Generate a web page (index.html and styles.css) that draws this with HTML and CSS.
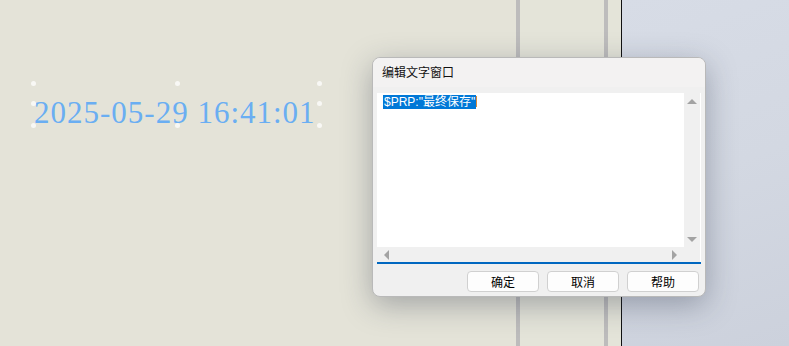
FILE: index.html
```html
<!DOCTYPE html>
<html lang="zh-CN">
<head>
    <meta charset="UTF-8">
    <title>编辑文字窗口</title>
    <link rel="stylesheet" href="styles.css">
</head>
<body>
    <!-- Drawing sheet -->
    <div class="sheet">
        <div class="note">2025-05-29 16:41:01</div>
        <span class="handle" style="left: 33px; top: 83px;"></span>
        <span class="handle" style="left: 177px; top: 83px;"></span>
        <span class="handle" style="left: 319px; top: 83px;"></span>
        <span class="handle" style="left: 33px; top: 103px;"></span>
        <span class="handle" style="left: 319px; top: 103px;"></span>
        <span class="handle" style="left: 33px; top: 125px;"></span>
        <span class="handle" style="left: 177px; top: 125px;"></span>
        <span class="handle" style="left: 319px; top: 125px;"></span>
    </div>
    <div class="rule"></div>
    <div class="strip"></div>
    <div class="rule"></div>
    <div class="strip strip-narrow"></div>
    <div class="edge"></div>
    <div class="desktop"></div>

    <!-- Edit text dialog -->
    <div class="dialog">
        <div class="dialog-title">编辑文字窗口</div>
        <div class="dialog-body">
            <div class="editor">
                <div class="editor-text"><span class="selected">$PRP:"最终保存"</span><span class="caret"></span></div>
                <div class="vscroll">
                    <span class="arrow arrow-up"></span>
                    <span class="arrow arrow-down"></span>
                </div>
                <div class="hscroll">
                    <span class="arrow arrow-left"></span>
                    <span class="arrow arrow-right"></span>
                </div>
                <div class="corner"></div>
            </div>
            <div class="actions">
                <button class="btn">确定</button>
                <button class="btn">取消</button>
                <button class="btn">帮助</button>
            </div>
        </div>
    </div>
</body>
</html>
```

FILE: styles.css
```css
* {
    margin: 0;
    padding: 0;
    box-sizing: border-box;
}

body {
    display: flex;
    height: 346px;
    overflow: hidden;
    font-family: 'Liberation Sans', 'Noto Sans CJK SC', sans-serif;
    font-size: 12px;
    position: relative;
}

.sheet {
    width: 516px;
    background: #e4e3d8;
    position: relative;
}

.note {
    position: absolute;
    left: 34px;
    top: 98px;
    font-family: 'Liberation Serif', serif;
    font-size: 31px;
    line-height: 30px;
    letter-spacing: 1px;
    color: #6aaef2;
    white-space: nowrap;
}

.handle {
    position: absolute;
    width: 5px;
    height: 5px;
    margin: -2px 0 0 -2px;
    border-radius: 50%;
    background: rgba(255,255,255,0.75);
}

.rule {
    width: 4px;
    background: #bdbcbc;
}

.strip {
    width: 84px;
    background: #e4e4d9;
}

.strip-narrow {
    width: 13px;
}

.edge {
    width: 1px;
    background: #111;
}

.desktop {
    flex: 1;
    background: linear-gradient(160deg, #d7dce6 0%, #d3d8e2 50%, #ccd1dc 100%);
}

.dialog {
    position: absolute;
    left: 372px;
    top: 57px;
    width: 334px;
    height: 240px;
    background: #f0f0f0;
    border: 1px solid #b9b9b9;
    border-radius: 8px;
    box-shadow: 0 8px 30px rgba(40,50,70,0.35);
    overflow: hidden;
}

.dialog-title {
    height: 29px;
    padding: 5px 0 0 9px;
    background: #f3f2f2;
    color: #111;
    font-size: 12px;
}

.dialog-body {
    padding: 6px 4px 0 4px;
}

.editor {
    display: grid;
    grid-template-columns: 1fr 17px;
    grid-template-rows: 154px 15px;
    height: 171px;
    border-bottom: 2px solid #0067c0;
    background: #f0f0f0;
}

.editor-text {
    background: #fff;
    padding: 3px 6px;
    line-height: 12px;
    white-space: nowrap;
}

.selected {
    background: #0078d7;
    color: #fff;
    font-size: 12px;
    padding: 0 1px;
}

.caret {
    display: inline-block;
    width: 1px;
    height: 11px;
    background: #d88a3a;
    vertical-align: -1px;
}

.vscroll {
    display: flex;
    flex-direction: column;
    justify-content: space-between;
    align-items: center;
    padding: 6px 0 5px;
    background: #f0f0f0;
    border-right: 1px solid #fff;
}

.hscroll {
    display: flex;
    justify-content: space-between;
    align-items: center;
    padding: 0 7px 0 7px;
    background: #f0f0f0;
}

.corner {
    background: #f0f0f0;
    border-right: 1px solid #fff;
}

.arrow {
    width: 0;
    height: 0;
    border: 5px solid transparent;
}

.arrow-up {
    border-bottom-color: #a3a3a3;
    border-top-width: 0;
}

.arrow-down {
    border-top-color: #a3a3a3;
    border-bottom-width: 0;
}

.arrow-left {
    border-right-color: #a3a3a3;
    border-left-width: 0;
}

.arrow-right {
    border-left-color: #a3a3a3;
    border-right-width: 0;
}

.actions {
    display: flex;
    justify-content: flex-end;
    gap: 8px;
    padding: 7px 2px 0 0;
}

.btn {
    width: 72px;
    height: 21px;
    background: #fdfdfd;
    border: 1px solid #d0d0d0;
    border-radius: 4px;
    font-family: 'Liberation Sans', 'Noto Sans CJK SC', sans-serif;
    font-size: 12px;
    color: #000;
}
```
